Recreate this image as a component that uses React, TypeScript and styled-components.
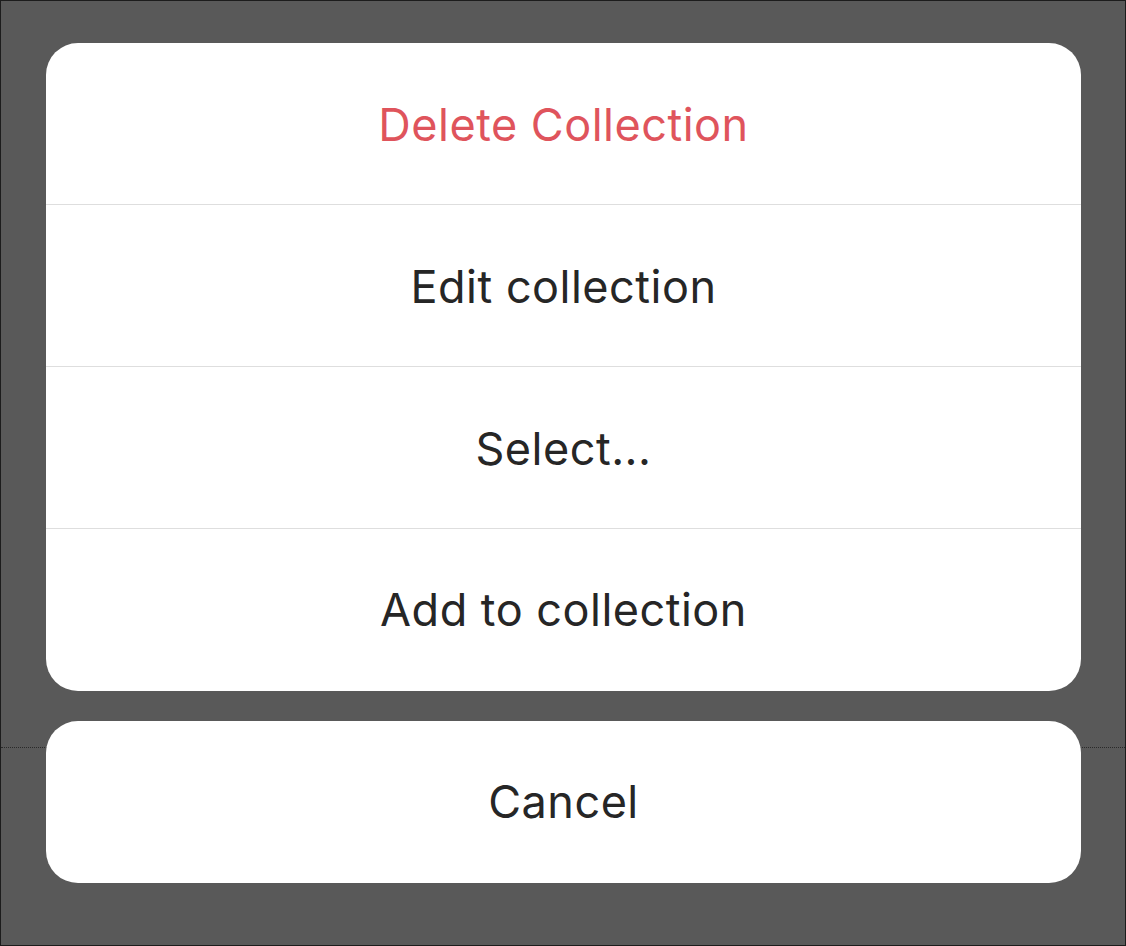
import styled, { createGlobalStyle } from "styled-components";

const GlobalStyle = createGlobalStyle`
  html, body {
    margin: 0;
    padding: 0;
    background: #595959;
  }
  body {
    font-family: Inter, "Noto Sans", sans-serif;
    -webkit-font-smoothing: antialiased;
  }
`;

const Screen = styled.div`
  position: relative;
  box-sizing: border-box;
  width: 1126px;
  height: 946px;
  border: 1px solid #1c1c1c;
  background: #595959;
  padding: 42px 44px 0 45px;
  display: flex;
  flex-direction: column;
  gap: 30px;
  overflow: hidden;
`;

// dotted rule of the view underneath the sheet
const UnderlayRule = styled.div`
  position: absolute;
  left: 0;
  right: 0;
  top: 746px;
  border-top: 1px dotted #2a2a2a;
  z-index: 0;
`;

const Group = styled.div`
  position: relative;
  z-index: 1;
  background: #ffffff;
  border-radius: 32px;
  overflow: hidden;
  display: flex;
  flex-direction: column;
`;

const Action = styled.button<{ $destructive?: boolean }>`
  all: unset;
  box-sizing: border-box;
  height: 162px;
  padding-top: 1px;
  display: flex;
  align-items: center;
  justify-content: center;
  font-family: Inter, "Noto Sans", sans-serif;
  font-size: 45px;
  font-weight: 400;
  letter-spacing: 0.5px;
  color: ${(p) => (p.$destructive ? "#df545c" : "#262626")};
  border-bottom: 1px solid #dedede;
  cursor: pointer;

  &:last-child {
    border-bottom: none;
    padding-top: 0;
    padding-bottom: 2px;
  }
`;

const actions = [
  { label: "Delete Collection", destructive: true },
  { label: "Edit collection" },
  { label: "Select..." },
  { label: "Add to collection" },
];

export default function App() {
  return (
    <>
      <GlobalStyle />
      <Screen>
        <UnderlayRule />
        <Group>
          {actions.map((a) => (
            <Action key={a.label} $destructive={a.destructive}>
              {a.label}
            </Action>
          ))}
        </Group>
        <Group>
          <Action>Cancel</Action>
        </Group>
      </Screen>
    </>
  );
}
